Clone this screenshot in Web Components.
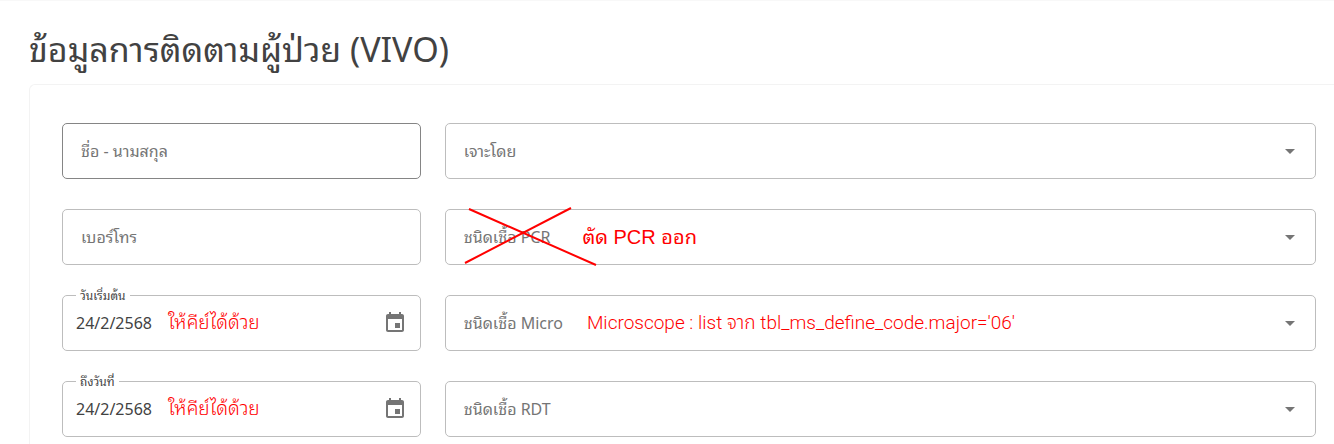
<!DOCTYPE html>
<html lang="th">
<head>
<meta charset="utf-8">
<title>ข้อมูลการติดตามผู้ป่วย (VIVO)</title>
<style>
  body {
    margin: 0;
    background: #fff;
    color: #424242;
    font-family: "Noto Sans", "Noto Sans Thai Looped", Loma, "Noto Sans Thai", sans-serif;
  }
</style>
</head>
<body>
<follow-page>
  <span slot="title">ข้อมูลการติดตามผู้ป่วย (VIVO)</span>
  <text-field label="ชื่อ - นามสกุล" class="hovered"></text-field>
  <select-field label="เจาะโดย"></select-field>
  <text-field label="เบอร์โทร"></text-field>
  <select-field label="ชนิดเชื้อ PCR">
    <review-note class="large">ตัด PCR ออก</review-note>
    <cross-mark slot="mark"></cross-mark>
  </select-field>
  <date-field label="วันเริ่มต้น" value="24/2/2568">
    <review-note>ให้คีย์ได้ด้วย</review-note>
  </date-field>
  <select-field label="ชนิดเชื้อ Micro">
    <review-note class="light">Microscope : list จาก tbl_ms_define_code.major='06'</review-note>
  </select-field>
  <date-field label="ถึงวันที่" value="24/2/2568">
    <review-note>ให้คีย์ได้ด้วย</review-note>
  </date-field>
  <select-field label="ชนิดเชื้อ RDT"></select-field>
</follow-page>

<script>
class FollowPage extends HTMLElement {
  constructor() {
    super();
    this.attachShadow({ mode: "open" });
  }

  connectedCallback() {
    this.shadowRoot.innerHTML = `
      <style>
        :host {
          display: block;
          border-top: 1px solid #f8f8f8;
          padding: 24px 0 0 29px;
        }
        h1 {
          margin: 0;
          font-size: 34px;
          font-weight: 400;
          line-height: 48px;
        }
        main {
          display: grid;
          grid-template-columns: 7fr 17fr;
          gap: 30px 24px;
          margin-top: 11px;
          padding: 38px 18px 7px 32px;
          border: 1px solid #f3f3f3;
          border-width: 1px 0 0 1px;
          border-radius: 6px 0 0 0;
        }
      </style>
      <h1><slot name="title"></slot></h1>
      <main><slot></slot></main>
    `;
  }
}
customElements.define("follow-page", FollowPage);

class TextField extends HTMLElement {
  constructor() {
    super();
    this.attachShadow({ mode: "open" });
  }

  connectedCallback() {
    this.shadowRoot.innerHTML = `
      <style>
        :host {
          display: grid;
          grid-template-columns: minmax(0, 1fr);
          height: 56px;
          --line: #bdbdbd;
        }
        :host(.hovered) {
          --line: #858585;
        }
        input, label {
          grid-area: 1 / 1;
        }
        input {
          box-sizing: border-box;
          width: 100%;
          padding: 0 18px;
          border: 1px solid var(--line);
          border-radius: 5px;
          background: none;
          color: inherit;
          font: inherit;
          outline: none;
        }
        label {
          align-self: center;
          padding: 0 19px;
          color: #757575;
          font-size: 16px;
          line-height: 24px;
          pointer-events: none;
        }
        input:focus + label {
          visibility: hidden;
        }
      </style>
      <input id="field" type="text">
      <label for="field">${this.getAttribute("label")}</label>
    `;
  }
}
customElements.define("text-field", TextField);

class SelectField extends HTMLElement {
  constructor() {
    super();
    this.attachShadow({ mode: "open" });
  }

  connectedCallback() {
    this.shadowRoot.innerHTML = `
      <style>
        :host {
          display: grid;
          grid-template-columns: minmax(0, 1fr);
          height: 56px;
          position: relative;
        }
        select, .content {
          grid-area: 1 / 1;
        }
        select {
          appearance: none;
          width: 100%;
          border: 1px solid #bdbdbd;
          border-radius: 5px;
          background: none;
          font: inherit;
          outline: none;
        }
        .content {
          display: flex;
          align-items: center;
          padding: 0 14px 0 19px;
          pointer-events: none;
        }
        label {
          color: #757575;
          font-size: 16px;
          line-height: 24px;
          white-space: nowrap;
        }
        svg {
          width: 24px;
          height: 24px;
          margin-left: auto;
          fill: #757575;
        }
      </style>
      <select id="field"><option value=""></option></select>
      <div class="content">
        <label for="field">${this.getAttribute("label")}</label>
        <slot></slot>
        <svg viewBox="0 0 24 24"><path d="M7 10l5 5 5-5z"/></svg>
      </div>
      <slot name="mark"></slot>
    `;
  }
}
customElements.define("select-field", SelectField);

class DateField extends HTMLElement {
  constructor() {
    super();
    this.attachShadow({ mode: "open" });
  }

  connectedCallback() {
    this.shadowRoot.innerHTML = `
      <style>
        :host {
          display: block;
          height: 56px;
        }
        fieldset {
          box-sizing: border-box;
          height: 64px;
          margin: -8px 0 0;
          padding: 0 13px;
          border: 1px solid #bdbdbd;
          border-radius: 5px;
          min-width: 0;
        }
        legend {
          height: 17px;
          padding: 0 4px;
          font-size: 12px;
          line-height: 17px;
        }
        .row {
          display: flex;
          align-items: center;
          height: 38px;
        }
        input {
          width: 80px;
          padding: 0;
          border: 0;
          background: none;
          color: inherit;
          font: inherit;
          font-size: 16px;
          line-height: 24px;
          outline: none;
        }
        button {
          display: flex;
          margin-left: auto;
          padding: 0;
          border: 0;
          background: none;
          cursor: pointer;
        }
        svg {
          width: 24px;
          height: 24px;
          fill: #757575;
        }
      </style>
      <fieldset>
        <legend><label for="field">${this.getAttribute("label")}</label></legend>
        <div class="row">
          <input id="field" type="text" value="${this.getAttribute("value")}">
          <slot></slot>
          <button type="button" aria-label="เลือกวันที่">
            <svg viewBox="0 0 24 24"><path d="M17 12h-5v5h5v-5zM16 1v2H8V1H6v2H5c-1.11 0-1.99.9-1.99 2L3 19c0 1.1.89 2 2 2h14c1.1 0 2-.9 2-2V5c0-1.1-.9-2-2-2h-1V1h-2zm3 18H5V8h14v11z"/></svg>
          </button>
        </div>
      </fieldset>
    `;
  }
}
customElements.define("date-field", DateField);

class ReviewNote extends HTMLElement {
  constructor() {
    super();
    this.attachShadow({ mode: "open" });
  }

  connectedCallback() {
    this.shadowRoot.innerHTML = `
      <style>
        :host {
          display: block;
          margin-left: 12px;
          color: #f00;
          font-family: Roboto, "Noto Sans Thai Looped", Loma, "Noto Sans Thai", sans-serif;
          font-size: 19px;
          font-weight: 300;
          line-height: 28px;
          white-space: nowrap;
        }
        :host(.large) {
          margin-left: 32px;
          font-family: "Liberation Sans", "Noto Sans Thai Looped", Loma, "Noto Sans Thai", sans-serif;
          font-size: 20px;
          font-weight: 400;
        }
        :host(.light) {
          margin-left: 24px;
        }
      </style>
      <slot></slot>
    `;
  }
}
customElements.define("review-note", ReviewNote);

// Red strokes struck over a field's label
class CrossMark extends HTMLElement {
  constructor() {
    super();
    this.attachShadow({ mode: "open" });
  }

  connectedCallback() {
    this.shadowRoot.innerHTML = `
      <style>
        :host {
          display: block;
          position: absolute;
          left: 18px;
          top: -4px;
          pointer-events: none;
        }
        svg {
          display: block;
          width: 136px;
          height: 64px;
          stroke: #f00;
          stroke-width: 2;
        }
      </style>
      <svg viewBox="0 0 136 64"><path d="M6 4L133 60M2 58L108 3"/></svg>
    `;
  }
}
customElements.define("cross-mark", CrossMark);
</script>
</body>
</html>
